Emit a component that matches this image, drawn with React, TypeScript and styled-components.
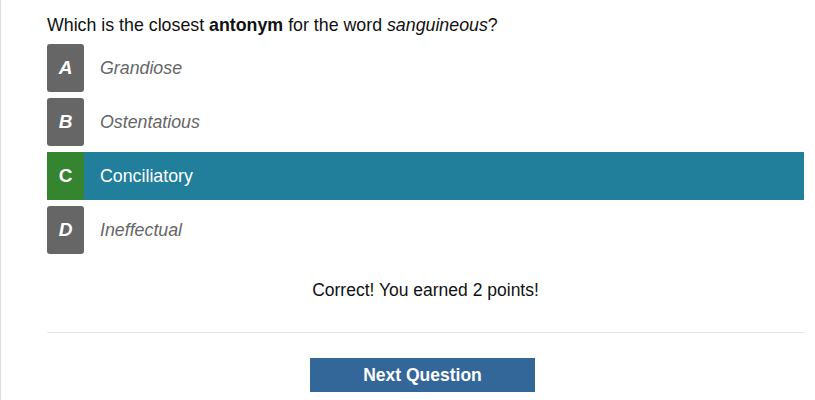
import React from 'react'
import styled, { createGlobalStyle } from 'styled-components'

const GlobalStyle = createGlobalStyle`
  html, body {
    margin: 0;
    padding: 0;
    background: #fff;
  }
  body {
    font-family: 'Liberation Sans', Arial, sans-serif;
    font-size: 18px;
    color: #111;
  }
`

const Page = styled.div`
  box-sizing: border-box;
  min-height: 400px;
  border-left: 1px solid #dedede;
  padding: 15px 11px 0 46px;
`

const Question = styled.p`
  margin: 0;
  font-size: 17.8px;
  line-height: 20px;
`

const Options = styled.ul`
  list-style: none;
  margin: 9px 0 0;
  padding: 0;
  display: flex;
  flex-direction: column;
  gap: 6px;
`

const Option = styled.li<{ $selected?: boolean }>`
  display: flex;
  align-items: center;
  height: 48px;
  background: ${p => (p.$selected ? '#217f9b' : 'transparent')};
`

const Letter = styled.span<{ $selected?: boolean }>`
  flex: none;
  display: flex;
  align-items: center;
  justify-content: center;
  width: 37px;
  height: 48px;
  border-radius: ${p => (p.$selected ? '0' : '3px')};
  background: ${p => (p.$selected ? '#35842f' : '#666')};
  color: #fff;
  font-size: 19px;
  font-weight: bold;
  font-style: ${p => (p.$selected ? 'normal' : 'italic')};
`

const Answer = styled.span<{ $selected?: boolean }>`
  margin-left: 16px;
  font-size: 17.8px;
  color: ${p => (p.$selected ? '#fff' : '#666')};
  font-style: ${p => (p.$selected ? 'normal' : 'italic')};
`

const Feedback = styled.p`
  margin: 26px 0 0;
  font-size: 17.5px;
  line-height: 20px;
  text-align: center;
`

const Rule = styled.hr`
  margin: 32px 0 0;
  border: none;
  border-top: 1px solid #e5e5e5;
`

const Actions = styled.div`
  display: flex;
  justify-content: center;
  padding-top: 25px;
`

const NextButton = styled.button`
  width: 225px;
  height: 34px;
  margin-right: 6px;
  border: none;
  border-radius: 0;
  background: #336699;
  color: #fff;
  font-family: 'Liberation Sans', Arial, sans-serif;
  font-size: 17.5px;
  font-weight: bold;
  cursor: pointer;
`

const options = [
  { key: 'A', text: 'Grandiose' },
  { key: 'B', text: 'Ostentatious' },
  { key: 'C', text: 'Conciliatory', selected: true },
  { key: 'D', text: 'Ineffectual' },
]

const App: React.FC = () => (
  <>
    <GlobalStyle />
    <Page>
      <Question>
        Which is the closest <b>antonym</b> for the word <i>sanguineous</i>?
      </Question>
      <Options>
        {options.map(o => (
          <Option key={o.key} $selected={o.selected}>
            <Letter $selected={o.selected}>{o.key}</Letter>
            <Answer $selected={o.selected}>{o.text}</Answer>
          </Option>
        ))}
      </Options>
      <Feedback>Correct! You earned 2 points!</Feedback>
      <Rule />
      <Actions>
        <NextButton>Next Question</NextButton>
      </Actions>
    </Page>
  </>
)

export default App
